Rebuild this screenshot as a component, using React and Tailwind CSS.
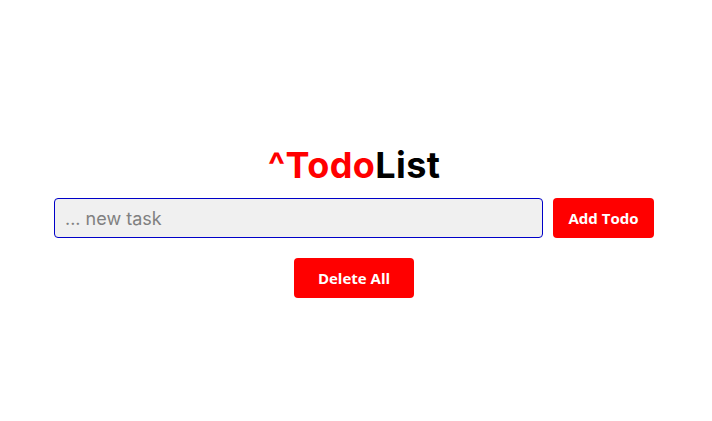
export default function App() {
  return (
    <div className="w-[712px] h-[421px] bg-white flex flex-col items-center pr-[4px] pt-[142px]" style={{ fontFamily: 'Inter, sans-serif' }}>
      <h1 className="text-[36px] font-bold leading-[46px] tracking-[0.4px]">
        <span className="text-[#ff0000]">^Todo</span>
        <span className="text-black">List</span>
      </h1>
      <div className="flex items-center gap-[10px] mt-[10px]">
        <input
          autoFocus
          className="w-[489px] h-[40px] bg-[#f0f0f0] border border-[#0000c8] rounded-[4px] px-[10px] text-[18px] text-black caret-black placeholder:text-[#808080] outline-none"
          placeholder="... new task"
          style={{ fontFamily: 'Inter, sans-serif' }}
        />
        <button className="w-[101px] h-[40px] bg-[#ff0000] rounded-[4px] text-white text-[15px] font-bold" style={{ fontFamily: '"Open Sans", sans-serif' }}>
          Add Todo
        </button>
      </div>
      <button className="mt-[20px] w-[120px] h-[40px] bg-[#ff0000] rounded-[4px] text-white text-[15px] font-bold" style={{ fontFamily: '"Open Sans", sans-serif' }}>
        Delete All
      </button>
    </div>
  );
}
